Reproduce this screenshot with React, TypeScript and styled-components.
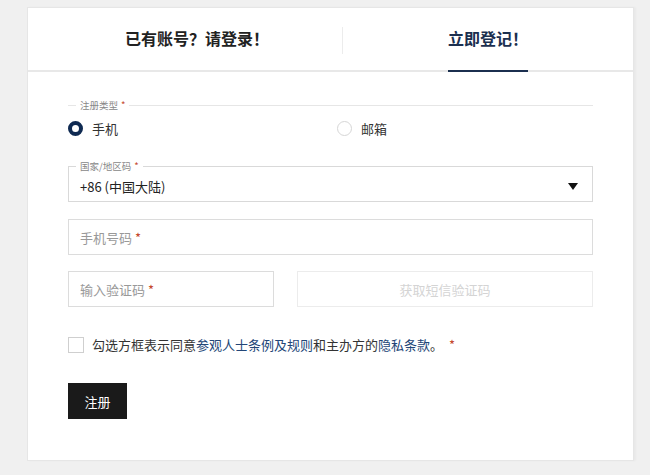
import React from 'react';
import styled, { createGlobalStyle } from 'styled-components';

const GlobalStyle = createGlobalStyle`
  html, body {
    margin: 0;
    padding: 0;
    background: #f0f0f0;
    font-family: "Noto Sans CJK SC", "Noto Sans", "Liberation Sans", sans-serif;
    color: #333;
  }
  * { box-sizing: border-box; }
`

const Page = styled.div`
  padding: 7px 16px 15px 27px;
`

const Card = styled.div`
  background: #fff;
  border: 1px solid #e6e6e6;
  box-shadow: 2px 0 2px rgba(0, 0, 0, 0.03);
`

const Tabs = styled.div`
  display: flex;
  height: 64px;
  padding-left: 24px;
  border-bottom: 2px solid #e8e8e8;
`

const Tab = styled.div`
  flex: 1;
  display: flex;
  justify-content: center;
`

const TabLabel = styled.span<{ $active?: boolean }>`
  display: flex;
  align-items: center;
  margin-bottom: -2px;
  padding-bottom: 2px;
  font-size: 16px;
  font-weight: 700;
  color: ${p => (p.$active ? '#1b2f4f' : '#222')};
  border-bottom: 2px solid ${p => (p.$active ? '#1b2f4f' : 'transparent')};
`

const TabDivider = styled.div`
  width: 1px;
  height: 27px;
  align-self: center;
  margin-top: 2px;
  background: #ececec;
`

const Form = styled.form`
  display: flex;
  flex-direction: column;
  padding: 28px 40px 41px 40px;
`

const Legend = styled.legend<{ $inset?: number }>`
  margin-left: ${p => p.$inset ?? 8}px;
  padding: 0 4px;
  font-size: 9.5px;
  line-height: 10px;
  color: #888;
`

const Star = styled.span<{ $gap?: number }>`
  color: #c4472c;
  margin-left: ${p => p.$gap ?? 3}px;
`

const TypeGroup = styled.fieldset`
  margin: 0;
  padding: 0;
  border: none;
  border-top: 1px solid #e6e6e6;
`

const RadioRow = styled.div`
  display: grid;
  grid-template-columns: 269px 1fr;
  padding-top: 6px;
  height: 30px;
`

const RadioOption = styled.label`
  display: flex;
  align-items: center;
  gap: 9px;
  font-size: 13px;
  color: #333;
`

const RadioDot = styled.span<{ $checked?: boolean }>`
  width: 15px;
  height: 15px;
  border-radius: 50%;
  border: ${p => (p.$checked ? '4.5px solid #0f2a52' : '1px solid #d6d6d6')};
  background: #fff;
`

const SelectBox = styled.fieldset`
  margin: 21px 0 0 0;
  padding: 0 11px;
  border: 1px solid #d9d9d9;
`

const SelectRow = styled.div`
  display: flex;
  align-items: center;
  justify-content: space-between;
  height: 30px;
  font-size: 13px;
  color: #222;
`

const TextBox = styled.div<{ $width?: number }>`
  display: flex;
  align-items: center;
  height: 36px;
  padding: 0 11px;
  border: 1px solid #dcdcdc;
  font-size: 13px;
  color: #999;
  width: ${p => (p.$width ? `${p.$width}px` : 'auto')};
`

const PhoneBox = styled(TextBox)`
  margin-top: 17px;
`

const CodeRow = styled.div`
  display: flex;
  gap: 23px;
  margin-top: 16px;
`

const CodeButton = styled.button`
  flex: 1;
  height: 36px;
  border: 1px solid #ececec;
  background: #fff;
  font-family: inherit;
  font-size: 13px;
  color: #d4d4d4;
`

const AgreeRow = styled.label`
  display: flex;
  align-items: center;
  gap: 8px;
  margin-top: 28px;
  font-size: 13px;
  color: #333;
`

const CheckBox = styled.span`
  width: 16px;
  height: 16px;
  border: 1px solid #cfcfcf;
  background: #fff;
`

const Link = styled.span`
  color: #234677;
`

const SubmitButton = styled.button`
  align-self: flex-start;
  margin-top: 29px;
  width: 59px;
  height: 36px;
  border: none;
  background: #1a1a1a;
  color: #fff;
  font-family: inherit;
  font-size: 13px;
`

const Arrow = () => (
  <svg width="10" height="7" viewBox="0 0 10 7" style={{ marginRight: 3 }}>
    <path d="M0 0 L10 0 L5 7 Z" fill="#111" />
  </svg>
)

const App: React.FC = () => {
  return (
    <Page>
      <GlobalStyle />
      <Card>
        <Tabs>
          <Tab>
            <TabLabel>已有账号？请登录！</TabLabel>
          </Tab>
          <TabDivider />
          <Tab>
            <TabLabel $active>立即登记！</TabLabel>
          </Tab>
        </Tabs>
        <Form onSubmit={e => e.preventDefault()}>
          <TypeGroup>
            <Legend>
              注册类型<Star>*</Star>
            </Legend>
            <RadioRow>
              <RadioOption>
                <RadioDot $checked />
                手机
              </RadioOption>
              <RadioOption>
                <RadioDot />
                邮箱
              </RadioOption>
            </RadioRow>
          </TypeGroup>

          <SelectBox>
            <Legend $inset={-4}>
              国家/地区码<Star>*</Star>
            </Legend>
            <SelectRow>
              +86 (中国大陆)
              <Arrow />
            </SelectRow>
          </SelectBox>

          <PhoneBox>
            手机号码<Star>*</Star>
          </PhoneBox>

          <CodeRow>
            <TextBox $width={206}>
              输入验证码<Star>*</Star>
            </TextBox>
            <CodeButton type="button">获取短信验证码</CodeButton>
          </CodeRow>

          <AgreeRow>
            <CheckBox />
            <span>
              勾选方框表示同意<Link>参观人士条例及规则</Link>和主办方的<Link>隐私条款</Link>。
              <Star $gap={6}>*</Star>
            </span>
          </AgreeRow>

          <SubmitButton type="submit">注册</SubmitButton>
        </Form>
      </Card>
    </Page>
  );
};

export default App;
